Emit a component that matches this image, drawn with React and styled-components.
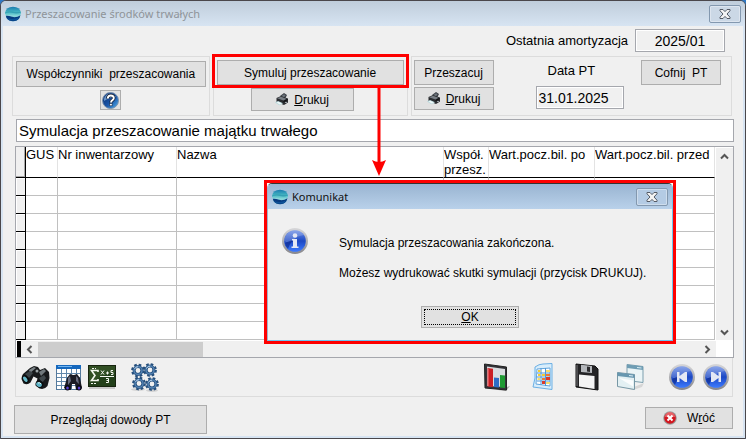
import React from "react";
import styled, { createGlobalStyle } from "styled-components";

const GlobalStyle = createGlobalStyle`
  * { box-sizing: border-box; }
  html { height: 100%; }
  body {
    margin: 0;
    min-height: 100%;
    background: #2f78c4;
    color: #000;
    font: 13px/16px "Liberation Sans", Arial, sans-serif;
  }
  button, input { font: inherit; color: inherit; margin: 0; }
`;

const Window = styled.div`
  display: flex;
  flex-direction: column;
  min-height: 100vh;
  border: 1px solid #4a474b;
  border-radius: 6px 6px 0 0;
  background: #d7e4f2;
  overflow: hidden;
`;

const TitleBar = styled.header`
  display: flex;
  align-items: center;
  gap: 4px;
  height: 25px;
  padding: 0 4px;
  font: 11px/16px "Noto Sans", "Open Sans", sans-serif;
  color: ${(p) => (p.$active ? "#111" : "#8f9499")};
  background: ${(p) =>
    p.$active
      ? "linear-gradient(#99b4d1, #b9d1ea)"
      : "linear-gradient(#bfcddb, #d7e4f2)"};
`;

const Title = styled.h1`
  flex: 1;
  margin: 0;
  font: inherit;
  white-space: nowrap;
`;

const CloseButton = styled.button`
  display: flex;
  align-items: center;
  justify-content: center;
  width: 32px;
  height: 18px;
  padding: 0;
  border: 1px solid #8398af;
  border-radius: 2px;
  background: ${(p) => (p.$active ? "#b4cbe4" : "#cbd8e6")};
  box-shadow: inset 0 0 0 1px rgba(255, 255, 255, 0.35);
`;

const Body = styled.main`
  flex: 1;
  display: flex;
  flex-direction: column;
  margin: 0 2px 2px;
  padding: 3px 9px 0;
  background: #f0f0f0;
`;

const TopRow = styled.div`
  display: flex;
  justify-content: flex-end;
  align-items: center;
  gap: 7px;
  padding-right: 9px;
`;

const Field = styled.input`
  width: ${(p) => p.$width};
  height: 23px;
  padding: 0 2px;
  border: 1px solid #a5a7ad;
  box-shadow: inset 0 0 0 1px #fff;
  border-radius: 0;
  background: #f0f0f0;
  font-size: 14px;
  text-align: ${(p) => (p.$center ? "center" : "left")};
`;

const Caption = styled(Field)`
  width: auto;
  margin-left: 4px;
  background: #fff;
  font-size: 15px;
`;

const Groups = styled.div`
  display: flex;
  gap: 3px;
  margin: 4px 2px 3px 0;
`;

const Group = styled.section`
  flex: ${(p) => p.$grow} 1 0;
  display: flex;
  flex-direction: column;
  align-items: center;
  gap: 3px;
  min-width: 0;
  height: 60px;
  padding: ${(p) => p.$pad || "4px 3px"};
  border: 1px solid #dcdcdc;
`;

const WideGroup = styled(Group)`
  flex-direction: row;
  align-items: flex-start;
  gap: 16px;
  padding: 3px 10px 3px 2px;
`;

const Stack = styled.div`
  display: flex;
  flex-direction: column;
  align-items: flex-start;
  gap: 2px;
`;

const DateStack = styled(Stack)`
  padding-left: 26px;
`;

const Button = styled.button`
  display: flex;
  flex-shrink: 0;
  align-items: center;
  justify-content: center;
  gap: ${(p) => p.$gap || "5px"};
  width: ${(p) => p.$width || "100%"};
  height: ${(p) => p.$height || "25px"};
  padding: 0;
  border: 1px solid #adadad;
  border-radius: 0;
  background: #e1e1e1;
  font-size: 12px;
  white-space: pre;
`;

const UndoButton = styled(Button)`
  margin-left: auto;
`;

const PrintButton = styled(Button)`
  margin-right: 16px;
`;

const HelpButton = styled(Button)`
  width: 21px;
  height: 20px;
`;

const DateLabel = styled.label`
  padding: 3px 0 5px 12px;
`;

const Highlight = styled.div`
  position: relative;
  width: 100%;
  &::after {
    content: "";
    position: absolute;
    inset: -6px -5px -3px;
    border: 3px solid #fe0000;
    pointer-events: none;
  }
`;

const Arrow = styled.svg`
  position: absolute;
  z-index: 3;
  top: 27px;
  left: 155px;
`;

const GridArea = styled.div`
  position: relative;
  margin: 4px 0 0 3px;
`;

const GridFrame = styled.div`
  border: 1px solid #a5a7ad;
  background: #fff;
`;

const GridMain = styled.div`
  display: flex;
  padding-bottom: 1px;
`;

const Table = styled.table`
  flex: 1;
  width: 0;
  table-layout: fixed;
  border-collapse: separate;
  border-spacing: 0;
`;

const Col = styled.col`
  width: ${(p) => p.$width};
`;

const HeadCell = styled.th`
  height: 31px;
  padding: 0;
  overflow: hidden;
  border-right: 1px solid #e3e3e3;
  border-bottom: 1px solid #000;
  font-size: 13px;
  font-weight: normal;
  line-height: 15px;
  text-align: left;
  vertical-align: top;
  white-space: pre;
`;

const HeadHandle = styled(HeadCell)`
  border-right-color: #000;
  background: #f0f0f0;
  box-shadow: inset -1px -1px 0 #a8a8a8;
`;

const Cell = styled.td`
  height: 18px;
  padding: 0;
  border-right: 1px solid #c0c0c0;
  border-bottom: 1px solid #c0c0c0;
`;

const RowHandle = styled(Cell)`
  border-color: #000;
  background: #f0f0f0;
  box-shadow: inset 1px 1px 0 #fff;
`;

const VScroll = styled.div`
  display: flex;
  flex-direction: column;
  justify-content: space-between;
  width: 17px;
  margin: 1px 0 0 1px;
  background: #f0f0f0;
`;

const HScroll = styled.div`
  display: flex;
  height: 16px;
  margin-right: 17px;
  background: #f0f0f0;
`;

const Splitter = styled.div`
  width: 5px;
  border-left: 1px solid #fff;
  background: #000;
`;

const ScrollButton = styled.button`
  display: flex;
  align-items: center;
  justify-content: center;
  width: 17px;
  height: 16px;
  padding: 0;
  border: 0;
  background: transparent;
`;

const Track = styled.div`
  flex: 1;
  display: flex;
  padding: 1px 0 0;
`;

const Thumb = styled.div`
  width: 25%;
  background: #cdcdcd;
`;

const Toolbar = styled.div`
  display: flex;
  justify-content: space-between;
  align-items: center;
  height: 39px;
  margin: 0 1px 8px 3px;
  padding: 0 3px 0 5px;
  border: solid #dcdcdc;
  border-width: 0 1px 1px;
`;

const ToolSet = styled.div`
  display: flex;
  align-items: center;
`;

const Tool = styled.button`
  display: flex;
  padding: 0;
  margin-left: ${(p) => p.$before || "6px"};
  border: 0;
  background: transparent;
`;

const Footer = styled.footer`
  display: flex;
  justify-content: space-between;
  align-items: flex-start;
  padding: 0 1px 0 2px;
`;

const FooterEnd = styled.div`
  padding-top: 2px;
`;

const Dialog = styled.div`
  position: absolute;
  z-index: 2;
  top: 34px;
  left: 249px;
  right: 58px;
  border: 3px solid #fe0000;
  background: #fff;
`;

const DialogWindow = styled.div`
  display: flex;
  flex-direction: column;
  border: 1px solid #6fc4ee;
  border-top-color: #333;
  border-left-color: #9fb4ca;
  border-radius: 5px 5px 0 0;
  overflow: hidden;
  background: #f0f0f0;
`;

const DialogBody = styled.div`
  display: flex;
  gap: 31px;
  padding: 19px 14px 0;
  font-size: 12px;
`;

const Message = styled.div`
  padding-top: 7px;
  white-space: nowrap;
`;

const Paragraph = styled.p`
  margin: 0 0 14px;
`;

const DialogActions = styled.div`
  display: flex;
  justify-content: center;
  padding: 11px 0 12px;
`;

const OkButton = styled(Button)`
  width: 98px;
  height: 22px;
  outline: 1px dotted #000;
  outline-offset: -4px;
`;

const Logo = () => (
  <svg width="16" height="16" viewBox="0 0 16 16" aria-hidden="true">
    <defs>
      <linearGradient id="sky" x1="0" y1="0" x2="0" y2="1">
        <stop offset="0" stopColor="#1673ad" />
        <stop offset=".35" stopColor="#3fb0c0" />
        <stop offset=".6" stopColor="#7ed6d6" />
      </linearGradient>
      <clipPath id="orb">
        <path d="M0 7Q1 .8 8 .8T16 7L14.500 12Q12 15.200 8 15.200T1.500 12z" />
      </clipPath>
    </defs>
    <g clipPath="url(#orb)">
      <rect width="16" height="16" fill="url(#sky)" />
      <path d="M0 6.500q5-2 8-1t8 0v1q-4 1.500-8 .5t-8 .5z" fill="#35a0b4" />
      <path d="M0 9.500q4-1 8 0t8-1v2H0z" fill="#8fd3dc" />
      <path d="M0 10q3-.5 7 .8t9-1.800v7H0z" fill="#063a80" />
      <path d="M2 12q6 2 12-.5l-2 3H4z" fill="#0d5298" />
    </g>
  </svg>
);

const CloseGlyph = () => (
  <svg width="12" height="10" viewBox="0 0 12 10" aria-hidden="true">
    <path d="M1 .5h3L6 2.600 8 .5h3v1.300L8 5l3 3.200v1.300H8L6 7.400 4 9.500H1V8.200L4 5 1 1.800z" fill="#f4f4f4" stroke="#555b66" />
  </svg>
);

const Chevron = ({ d }) => (
  <svg width="9" height="9" viewBox="0 0 9 9" fill="none" stroke="#555" strokeWidth="2" aria-hidden="true">
    <path d={d} />
  </svg>
);

const Printer = () => (
  <svg width="14" height="13" viewBox="0 0 14 13" aria-hidden="true">
    <path d="M5 3l4-3 3 2-2 4z" fill="#3b3f45" />
    <path d="M6.500 3L9 1.200l1.600 1L8.500 5z" fill="#6d747c" />
    <path d="M1.500 5L6 3l7 2.500v4L9 12 1.500 9z" fill="#2a2c30" />
    <path d="M2 5.200L6 3.700l5.500 2L8.500 7.600z" fill="#777d84" />
    <path d="M0 9.500L3 8l5 2.300-3.500 2z" fill="#b9d8dc" />
    <path d="M1.500 9.600L3.200 8.800l3.500 1.600-2 1z" fill="#eef8f8" />
    <path d="M8.500 8l4-2v1l-4 2.200z" fill="#0c0c0e" />
    <rect x="10" y="9" width="2" height="1" fill="#9aa0a6" />
  </svg>
);

const HelpIcon = () => (
  <svg width="17" height="17" viewBox="0 0 17 17" aria-hidden="true">
    <defs>
      <linearGradient id="help" x1="0" y1="0" x2="1" y2="1">
        <stop offset="0" stopColor="#0b2a66" />
        <stop offset=".55" stopColor="#1a55a8" />
        <stop offset="1" stopColor="#58b8f2" />
      </linearGradient>
    </defs>
    <circle cx="8.500" cy="8.500" r="8" fill="url(#help)" stroke="#7d93ad" />
    <path d="M2 7a6.500 6.500 0 0 1 12-2Q8 5 2 9z" fill="#8db7e2" opacity=".7" />
    <path d="M5.800 6.500q0-3 3-3t3 2.600q0 1.400-1.600 2.300-1.200.7-1.200 2" fill="none" stroke="#111a2c" strokeWidth="3.400" />
    <path d="M5.800 6.500q0-3 3-3t3 2.600q0 1.400-1.600 2.300-1.200.7-1.200 2" fill="none" stroke="#fff" strokeWidth="1.900" />
    <rect x="7.800" y="11.600" width="2.300" height="2.200" fill="#fff" stroke="#111a2c" strokeWidth=".5" />
  </svg>
);

const Binoculars = () => (
  <svg width="29" height="26" viewBox="0 0 29 26" aria-hidden="true">
    <path d="M2 10l7-6 4-2 4 1 2 3 5-2 4 4 .5 6-2 8q-3 4-8 2.500l-4-3 2-7-4-2-3 6q-3 3-7 1L.5 15q0-3 1.500-5z" fill="#17191b" />
    <path d="M8 6l5-3 2 1-6 5z" fill="#7b8387" />
    <path d="M18 8l5-3 2 2-5 5z" fill="#71797d" />
    <path d="M4 10l5-3 3 2-4 5z" fill="#3c4347" />
    <path d="M18 14l5-3 2 3-4 5z" fill="#40484c" />
    <circle cx="16" cy="7" r="1.500" fill="#9ba3a6" />
    <ellipse cx="4.500" cy="15" rx="3" ry="4.200" fill="#0b0d0e" transform="rotate(-35 4.500 15)" />
    <ellipse cx="4.300" cy="15.300" rx="1.700" ry="3" fill="#69bccc" transform="rotate(-35 4.300 15.300)" />
    <ellipse cx="18.500" cy="20" rx="4" ry="3.600" fill="#0b0d0e" transform="rotate(30 18.500 20)" />
    <ellipse cx="18" cy="20.500" rx="3" ry="2.200" fill="#5db1c4" transform="rotate(30 18 20.500)" />
    <path d="M17 19q2-1 3 1" stroke="#dff6fa" fill="none" />
  </svg>
);

const TableSearch = () => (
  <svg width="26" height="27" viewBox="0 0 26 27" aria-hidden="true">
    <rect x=".5" y="1.500" width="24" height="24" fill="#fff" stroke="#54799c" />
    <rect x="0" y="1" width="25" height="4" fill="#1668bd" />
    <rect x="2" y="2" width="14" height="1" fill="#72b4ef" />
    <path d="M5.500 5v21M10.500 5v21M15.500 5v21M20.500 5v21M1 9.500h23M1 13.500h23M1 17.500h23M1 21.500h23" stroke="#6288aa" />
    <path d="M8 24l3-10 3-4 3 1h1l3-1 3 4 2 10-2 2h-4l-1-6h-3l-1 6h-4z" fill="#1b1c24" />
    <path d="M12 14l2-2 1 5-3 4zM20 12l2 2 1 6-3-3z" fill="#676b7d" />
    <ellipse cx="11.500" cy="23.700" rx="2.700" ry="2.700" fill="#09090f" />
    <ellipse cx="23" cy="23.700" rx="2.700" ry="2.700" fill="#09090f" />
    <ellipse cx="11.500" cy="24" rx="1.300" ry="1.600" fill="#5b43d4" />
    <ellipse cx="23" cy="24" rx="1.300" ry="1.600" fill="#5b43d4" />
  </svg>
);

const Blackboard = () => (
  <svg width="28" height="26" viewBox="0 0 28 26" aria-hidden="true">
    <rect x="1" y="23" width="26" height="2" fill="#c9c9c9" />
    <rect x=".5" y="1.500" width="27" height="21" fill="#23401a" stroke="#17240f" />
    <path d="M1 2h26v6Q14 11 1 19z" fill="#3a5a2b" opacity=".6" />
    <g fill="none" stroke="#f4f7f0">
      <path d="M10 8V6.500H3.500L7 11.500l-3.500 5H10V15" strokeWidth="1.600" />
      <path d="M4 4.500h4M3 19.500h6" strokeDasharray="2 1" />
      <path d="M12 12.500h14" />
      <path d="M13 6.500l3 4M16 6.500l-3 4M18 9h3M19.500 7.500v3M25 6.500h-2v2h2v2h-2" />
      <path d="M18 14.500h2.500v4H18M18.500 16.500h2" />
    </g>
  </svg>
);

const Gears = () => (
  <svg width="28" height="29" viewBox="0 0 28 29" aria-hidden="true">
    <ellipse cx="7" cy="26.500" rx="7" ry="1.500" fill="#d2d2d2" />
    <ellipse cx="21" cy="27.500" rx="6" ry="1.500" fill="#d2d2d2" />
    {[[7, 7.500], [19, 7], [8, 20.500], [21, 21]].map(([x, y]) => (
      <g key={`${x}-${y}`} transform={`translate(${x} ${y})`} fill="none">
        <circle r="5.600" stroke="#264f7c" strokeWidth="2.600" strokeDasharray="2.500 1.900" />
        <circle r="3.900" stroke="#2a5482" strokeWidth="3" />
        <circle r="4" stroke="#5584b4" strokeWidth="1.400" />
        <path d="M-3.500-1.500a3.800 3.800 0 0 1 3.500-2.300" stroke="#b4cfe8" />
      </g>
    ))}
  </svg>
);

const BarChart = () => (
  <svg width="27" height="29" viewBox="0 0 27 29" aria-hidden="true">
    <path d="M14 27l12-4-4 5z" fill="#a8a8a8" />
    <path d="M.5 1l22 3v23L1 25z" fill="#333338" stroke="#222" />
    <path d="M3 3.500l18 2.500v18L3 23z" fill="#d9dcdf" />
    <path d="M3.500 5L9 5.800V24l-5.500-.5z" fill="#cc1f24" />
    <path d="M10 14.500l5 .5v9.500l-5-.5z" fill="#2e6dc4" />
    <path d="M16 12l5 .5V25l-5-.4z" fill="#1f9a33" />
    <path d="M4 5.500l1 .2V23l-1-.1z" fill="#e25055" />
  </svg>
);

const Report = () => (
  <svg width="22" height="28" viewBox="0 0 22 28" aria-hidden="true">
    <path d="M0 8l5-4v20l-3-1z" fill="#e3f1fb" />
    <path d="M4 4q4-3 8-3l9-.5v26L2 24q3-8 2-20z" fill="#d8edfb" stroke="#6bafe4" />
    <path d="M6 6l13-1v18L5 21z" fill="#fff" stroke="#62a5dd" />
    <path d="M6 10h13M6 14h13M6 18h13M10 5v17M14.500 5v18" stroke="#4f98d8" />
    <path d="M7 7h2.500v2H7zM7 11h2.500v2H7zM11 11h3v2h-3z" fill="#f2cd32" />
    <path d="M11 15h3v2h-3zM15 11h4v2h-4z" fill="#ef7a2b" />
    <path d="M15 14h4v3h-4zM11 18h3v3h-3z" fill="#dc3a2b" />
    <path d="M15 7h4v2h-4zM6.500 15h3v2h-3zM15 19h4v2h-4z" fill="#f6dc6c" />
  </svg>
);

const Floppy = () => (
  <svg width="24" height="28" viewBox="0 0 24 28" aria-hidden="true">
    <path d="M1 1l19 2 3 3v21L1 24z" fill="#242426" stroke="#111" />
    <path d="M6 1.800l11 1.200V10L6 9z" fill="#b5b8bc" />
    <path d="M12 3.500l3 .4V9l-3-.4z" fill="#2b2b2d" />
    <path d="M4 11.500L19.500 13v13L4 23.500z" fill="#f4f4f4" />
    <path d="M2 2v21" stroke="#77777a" />
  </svg>
);

const Windows = () => (
  <svg width="27" height="26" viewBox="0 0 27 26" aria-hidden="true">
    <path d="M12 25l15-6-2 4-9 3z" fill="#d6d6d6" />
    <path d="M10 .5l16 2v16l-16-2z" fill="#eaf4f6" stroke="#7d9fae" />
    <path d="M10 .5l16 2V6L10 4z" fill="#6f9db4" />
    <path d="M20 3l4.500.6v1L20 4z" fill="#d9edf4" />
    <path d="M.5 8.500l17 2v15L.500 22.500z" fill="#e3f0f3" stroke="#7797a5" />
    <path d="M.5 8.500l17 2V14l-17-2z" fill="#6797b0" />
    <path d="M2 14l14 2.500v6z" fill="#fff" opacity=".8" />
    <path d="M12 11l4 .6v1l-4-.6z" fill="#d9edf4" />
  </svg>
);

const Orb = ({ id, size, children }) => (
  <svg width={size} height={size} viewBox="0 0 26 26" aria-hidden="true">
    <defs>
      <linearGradient id={id} x1="0" y1="0" x2="0" y2="1">
        <stop offset="0" stopColor="#6d8fe6" />
        <stop offset=".5" stopColor="#1c48c4" />
        <stop offset="1" stopColor="#3d7bff" />
      </linearGradient>
      <linearGradient id={`${id}-rim`} x1="0" y1="0" x2="0" y2="1">
        <stop offset="0" stopColor="#d8d8da" />
        <stop offset="1" stopColor="#86868c" />
      </linearGradient>
    </defs>
    <circle cx="13" cy="13" r="13" fill={`url(#${id}-rim)`} />
    <circle cx="13" cy="13" r="10.800" fill={`url(#${id})`} />
    <path d="M2.400 13A10.700 10.700 0 0 1 22 7Q15 8 11 12 7 16 2.400 13z" fill="#fff" opacity=".2" />
    <path d="M3 15a10 10 0 0 0 3 6Q8 13 14 12 8 12 3 15z" fill="#0a2586" opacity=".6" />
    <g fill="#e4e8f4">{children}</g>
  </svg>
);

const ErrorIcon = () => (
  <svg width="14" height="14" viewBox="0 0 14 14" aria-hidden="true">
    <circle cx="7" cy="7" r="6.800" fill="#9c9c9c" />
    <circle cx="7" cy="7" r="5.800" fill="#d2161f" />
    <path d="M2 6a5 5 0 0 1 10 0Q7 5 2 6z" fill="#f08085" opacity=".7" />
    <path d="M4.500 4.500l5 5M9.500 4.500l-5 5" stroke="#fff" strokeWidth="2" />
  </svg>
);

const columns = [
  { title: "GUS", width: "32px" },
  { title: "Nr inwentarzowy", width: "119px" },
  { title: "Nazwa", width: "auto" },
  { title: "Współ.\nprzesz.", width: "45px" },
  { title: "Wart.pocz.bil. po", width: "106px" },
  { title: "Wart.pocz.bil. przed", width: "120px" },
];

const rows = Array.from({ length: 9 }, (_, i) => i);

const DataGrid = () => (
  <GridFrame>
    <GridMain>
      <Table>
        <colgroup>
          <Col $width="10px" />
          {columns.map((c) => <Col key={c.title} $width={c.width} />)}
        </colgroup>
        <thead>
          <tr>
            <HeadHandle />
            {columns.map((c) => <HeadCell key={c.title}>{c.title}</HeadCell>)}
          </tr>
        </thead>
        <tbody>
          {rows.map((r) => (
            <tr key={r}>
              <RowHandle />
              {columns.map((c) => <Cell key={c.title} />)}
            </tr>
          ))}
        </tbody>
      </Table>
      <VScroll>
        <ScrollButton aria-label="W górę"><Chevron d="M1 6.500L4.500 3 8 6.500" /></ScrollButton>
        <ScrollButton aria-label="W dół"><Chevron d="M1 2.500L4.500 6 8 2.500" /></ScrollButton>
      </VScroll>
    </GridMain>
    <HScroll>
      <Splitter />
      <ScrollButton aria-label="W lewo"><Chevron d="M6.500 1L3 4.500 6.500 8" /></ScrollButton>
      <Track><Thumb /></Track>
      <ScrollButton aria-label="W prawo"><Chevron d="M2.500 1L6 4.500 2.500 8" /></ScrollButton>
    </HScroll>
  </GridFrame>
);

const MessageDialog = () => (
  <Dialog role="dialog" aria-label="Komunikat">
    <DialogWindow>
      <TitleBar $active>
        <Logo />
        <Title as="h2">Komunikat</Title>
        <CloseButton $active aria-label="Zamknij komunikat"><CloseGlyph /></CloseButton>
      </TitleBar>
      <DialogBody>
        <Orb id="info" size={26}>
          <circle cx="13" cy="7.500" r="2.300" />
          <path d="M10 11h5v7.500h1.500v1.500h-7v-1.500H11V12.500h-1z" />
        </Orb>
        <Message>
          <Paragraph>Symulacja przeszacowania zakończona.</Paragraph>
          <Paragraph>Możesz wydrukować skutki symulacji (przycisk DRUKUJ).</Paragraph>
        </Message>
      </DialogBody>
      <DialogActions>
        <OkButton><span><u>O</u>K</span></OkButton>
      </DialogActions>
    </DialogWindow>
  </Dialog>
);

export default function App() {
  return (
    <>
      <GlobalStyle />
      <Window>
        <TitleBar>
          <Logo />
          <Title>Przeszacowanie środków trwałych</Title>
          <CloseButton aria-label="Zamknij"><CloseGlyph /></CloseButton>
        </TitleBar>
        <Body>
          <TopRow>
            <label htmlFor="last">Ostatnia amortyzacja</label>
            <Field id="last" $width="90px" $center readOnly defaultValue="2025/01" />
          </TopRow>
          <Groups>
            <Group $grow={198}>
              <Button $height="26px">{"Współczynniki  przeszacowania"}</Button>
              <HelpButton aria-label="Pomoc"><HelpIcon /></HelpButton>
            </Group>
            <Group $grow={195} $pad="3px 3px">
              <Highlight>
                <Button>Symuluj przeszacowanie</Button>
                <Arrow width="14" height="90" viewBox="0 0 14 90" aria-hidden="true">
                  <path d="M7 0v78" stroke="#fe0000" strokeWidth="3" />
                  <path d="M0 73q7 4 14 0L7 89z" fill="#fe0000" />
                </Arrow>
              </Highlight>
              <PrintButton $width="103px" $height="23px"><Printer /><span><u>D</u>rukuj</span></PrintButton>
            </Group>
            <WideGroup $grow={321}>
              <Stack>
                <Button $width="80px">Przeszacuj</Button>
                <Button $width="80px" $height="23px"><Printer /><span><u>D</u>rukuj</span></Button>
              </Stack>
              <DateStack>
                <DateLabel htmlFor="date">Data PT</DateLabel>
                <Field id="date" $width="88px" defaultValue="31.01.2025" />
              </DateStack>
              <UndoButton $width="80px">{"Cofnij  PT"}</UndoButton>
            </WideGroup>
          </Groups>
          <Caption aria-label="Opis" defaultValue="Symulacja przeszacowanie majątku trwałego" />
          <GridArea>
            <DataGrid />
            <MessageDialog />
          </GridArea>
          <Toolbar>
            <ToolSet>
              <Tool $before="0px" aria-label="Szukaj"><Binoculars /></Tool>
              <Tool aria-label="Szukaj w tabeli"><TableSearch /></Tool>
              <Tool aria-label="Sumowanie"><Blackboard /></Tool>
              <Tool $before="15px" aria-label="Ustawienia"><Gears /></Tool>
            </ToolSet>
            <ToolSet>
              <Tool aria-label="Wykres"><BarChart /></Tool>
              <Tool $before="20px" aria-label="Raport"><Report /></Tool>
              <Tool $before="22px" aria-label="Zapisz"><Floppy /></Tool>
              <Tool $before="18px" aria-label="Okna"><Windows /></Tool>
              <Tool $before="25px" aria-label="Poprzedni">
                <Orb id="prev" size={26}><path d="M8 8h2.500v4L16 8h2v10h-2l-5.500-4v4H8z" /></Orb>
              </Tool>
              <Tool $before="8px" aria-label="Następny">
                <Orb id="next" size={26}><path d="M18 8h-2.500v4L10 8H8v10h2l5.500-4v4H18z" /></Orb>
              </Tool>
            </ToolSet>
          </Toolbar>
          <Footer>
            <Button $width="193px" $height="29px">Przeglądaj dowody PT</Button>
            <FooterEnd>
              <Button $width="88px" $height="22px" $gap="10px"><ErrorIcon /><span>W<u>r</u>óć</span></Button>
            </FooterEnd>
          </Footer>
        </Body>
      </Window>
    </>
  );
}
